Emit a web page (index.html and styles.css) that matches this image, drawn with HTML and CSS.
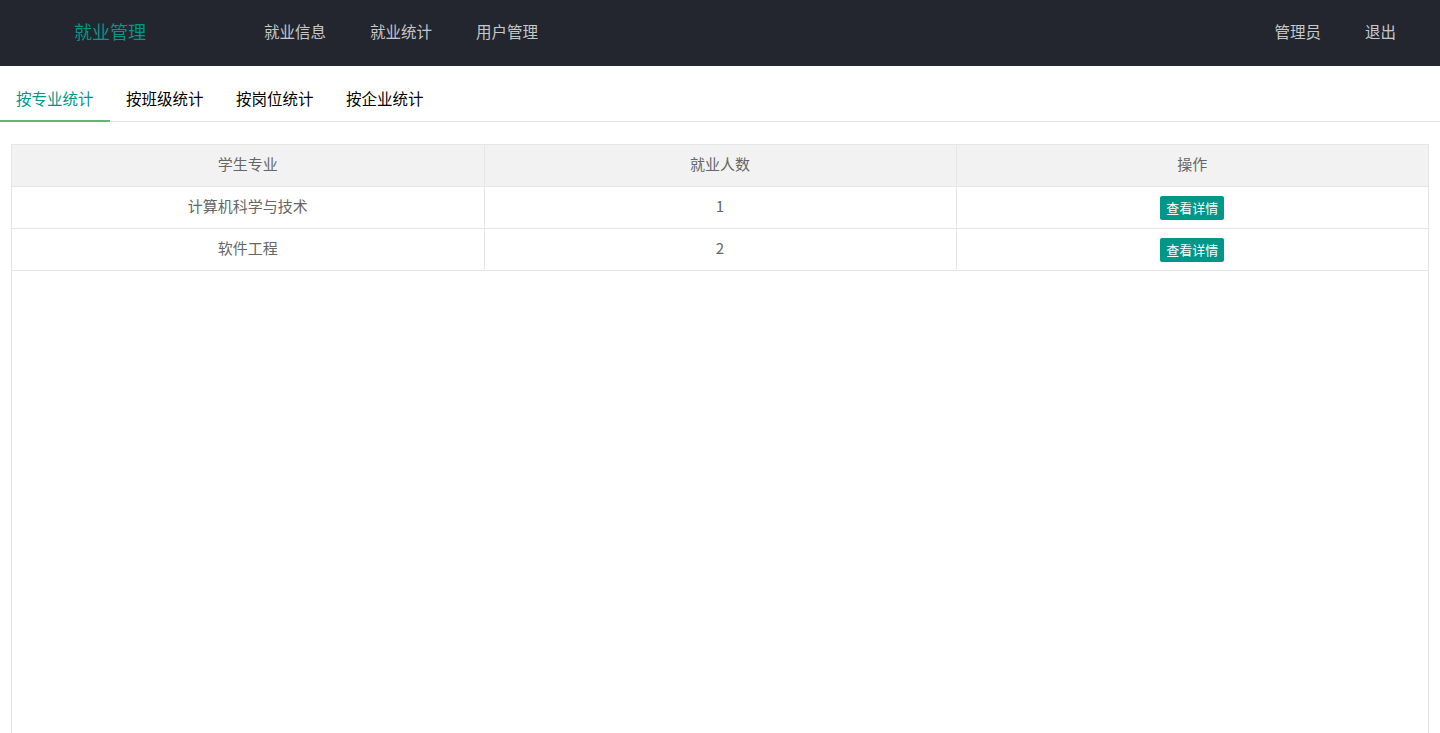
FILE: index.html
```
<!DOCTYPE html>
<html lang="zh-CN">
<head>
    <meta charset="utf-8" />
    <title>就业统计</title>
    <link rel="stylesheet" href="styles.css">
</head>
<body>

    <div class="header">
        <div class="logo">就业管理</div>
        <ul class="nav">
            <li>就业信息</li>
            <li>就业统计</li>
            <li>用户管理</li>
        </ul>
        <ul class="nav nav-right">
            <li>管理员</li>
            <li>退出</li>
        </ul>
    </div>

    <div class="tab-title">
        <div class="tab this">按专业统计</div>
        <div class="tab">按班级统计</div>
        <div class="tab">按岗位统计</div>
        <div class="tab">按企业统计</div>
    </div>

    <div class="table-box">
        <table class="data-table">
            <thead>
                <tr>
                    <th>学生专业</th>
                    <th>就业人数</th>
                    <th>操作</th>
                </tr>
            </thead>
            <tbody>
                <tr>
                    <td>计算机科学与技术</td>
                    <td>1</td>
                    <td><button class="btn-xs">查看详情</button></td>
                </tr>
                <tr>
                    <td>软件工程</td>
                    <td>2</td>
                    <td><button class="btn-xs">查看详情</button></td>
                </tr>
            </tbody>
        </table>
    </div>

</body>
</html>
```

FILE: styles.css
```
body {
    margin: 0;
    font-family: "Noto Sans CJK SC", "Liberation Sans", sans-serif;
    font-size: 15px;
    color: #666;
    background-color: #fff;
    height: 733px;
    display: flex;
    flex-direction: column;
    overflow: hidden;
}

.header {
    height: 66px;
    box-sizing: border-box;
    padding-bottom: 4px;
    background-color: #23262e;
    display: flex;
    align-items: center;
    flex-shrink: 0;
}

.logo {
    width: 220px;
    text-align: center;
    color: #009688;
    font-size: 18px;
}

.nav {
    list-style: none;
    margin: 0;
    padding: 0 0 0 22px;
    display: flex;
}

    .nav li {
        padding: 0 22px;
        color: rgba(255,255,255,0.75);
        font-size: 15.5px;
        cursor: pointer;
    }

.nav-right {
    margin-left: auto;
    padding: 0 22px 0 0;
}

.tab-title {
    display: flex;
    height: 40px;
    margin-top: 15px;
    border-bottom: 1px solid #e2e2e2;
    flex-shrink: 0;
}

.tab {
    width: 110px;
    box-sizing: border-box;
    padding: 0 0 6px 16px;
    line-height: 34px;
    color: #000;
    font-size: 15.5px;
    cursor: pointer;
}

    .tab.this {
        color: #009688;
        border-bottom: 2px solid #5fb878;
        height: 41px;
    }

.table-box {
    flex: 1;
    margin: 22px 11px 0 11px;
    border: 1px solid #e6e6e6;
    border-bottom: none;
}

.data-table {
    width: 100%;
    border-collapse: collapse;
    table-layout: fixed;
}

    .data-table th,
    .data-table td {
        height: 37px;
        padding: 0 15px 4px 15px;
        text-align: center;
        border-bottom: 1px solid #e6e6e6;
        font-weight: normal;
    }

        .data-table th + th,
        .data-table td + td {
            border-left: 1px solid #e6e6e6;
        }

    .data-table thead tr {
        background-color: #f2f2f2;
    }

.btn-xs {
    height: 24px;
    padding: 0 6px;
    vertical-align: -5px;
    font-family: inherit;
    font-size: 13px;
    color: #fff;
    background-color: #009688;
    border: none;
    border-radius: 2px;
    cursor: pointer;
}
```
